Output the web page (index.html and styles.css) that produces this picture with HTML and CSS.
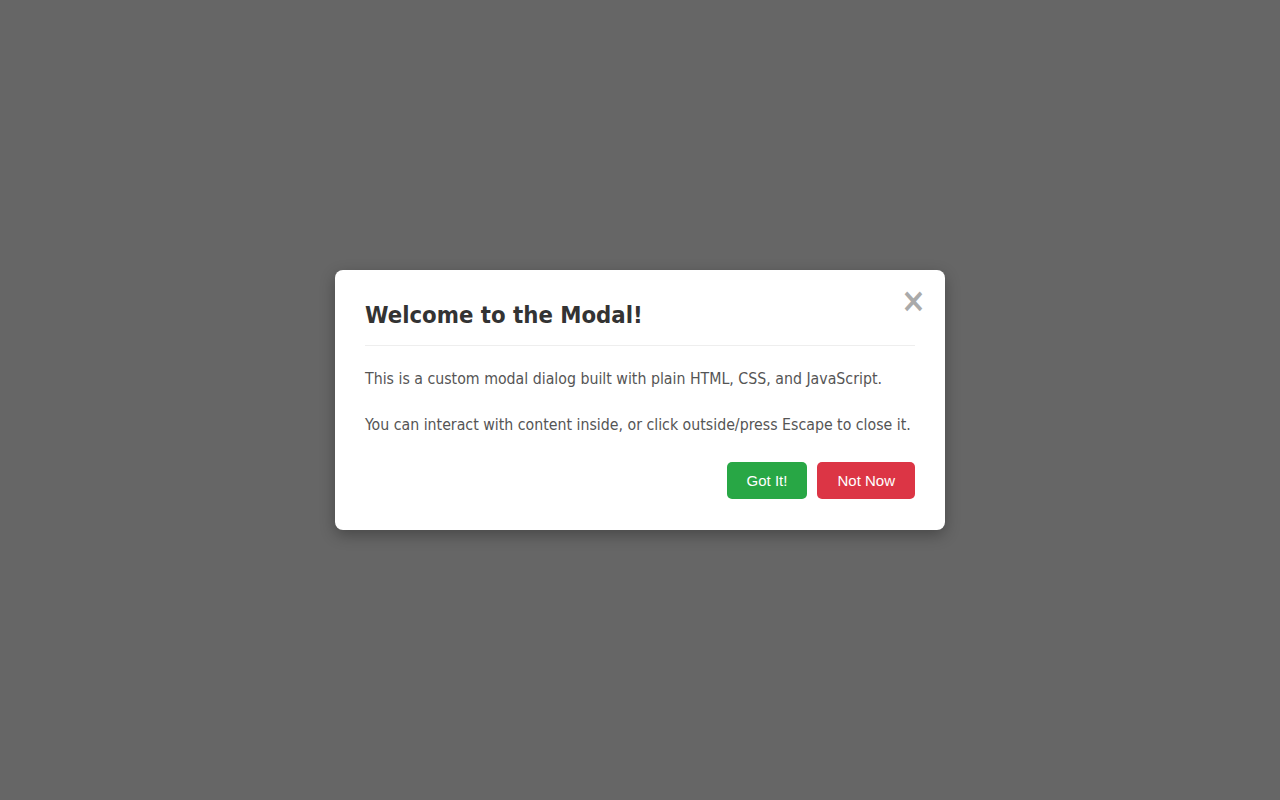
FILE: index.html
```html
<!DOCTYPE html>
<html lang="en">
<head>
<meta charset="utf-8">
<title>Modal</title>
<link rel="stylesheet" href="styles.css">
</head>
<body>
<div class="overlay">
  <div class="modal" role="dialog" aria-labelledby="modal-title">
    <button class="close" aria-label="Close">&times;</button>
    <h2 id="modal-title" class="modal-title">Welcome to the Modal!</h2>
    <div class="modal-body">
      <p>This is a custom modal dialog built with plain HTML, CSS, and JavaScript.</p>
      <p>You can interact with content inside, or click outside/press Escape to close it.</p>
    </div>
    <div class="modal-actions">
      <button class="btn btn-ok">Got It!</button>
      <button class="btn btn-no">Not Now</button>
    </div>
  </div>
</div>
</body>
</html>
```
FILE: styles.css
```css
html, body {
  margin: 0;
  height: 100%;
}
body {
  font-family: 'DejaVu Sans Condensed', 'DejaVu Sans', sans-serif;
  background: #ffffff;
}
.overlay {
  height: 100%;
  background: rgba(0, 0, 0, 0.6);
  display: flex;
  align-items: center;
  justify-content: center;
}
.modal {
  position: relative;
  width: 550px;
  padding: 30px 30px 31px;
  background: #fff;
  border-radius: 8px;
  box-shadow: 0 5px 15px rgba(0, 0, 0, 0.3);
}
.close {
  position: absolute;
  top: 14px;
  right: 19px;
  border: none;
  background: none;
  padding: 0;
  font-family: inherit;
  font-size: 33px;
  font-weight: bold;
  line-height: 1;
  color: #aaa;
  cursor: pointer;
}
.modal-title {
  margin: 0 0 20px;
  padding-bottom: 14px;
  border-bottom: 1px solid #eee;
  font-size: 23.7px;
  line-height: 31px;
  color: #333;
}
.modal-body p {
  margin: 0 0 20px;
  font-size: 15.75px;
  line-height: 25.6px;
  color: #555;
}
.modal-actions {
  display: flex;
  justify-content: flex-end;
  gap: 10px;
  margin-top: 25px;
}
.btn {
  border: none;
  border-radius: 5px;
  padding: 10px 20px;
  font-family: 'Liberation Sans', Arial, sans-serif;
  font-size: 15px;
  color: #fff;
  cursor: pointer;
}
.btn-ok { background: #28a745; }
.btn-no { background: #dc3545; }
```
